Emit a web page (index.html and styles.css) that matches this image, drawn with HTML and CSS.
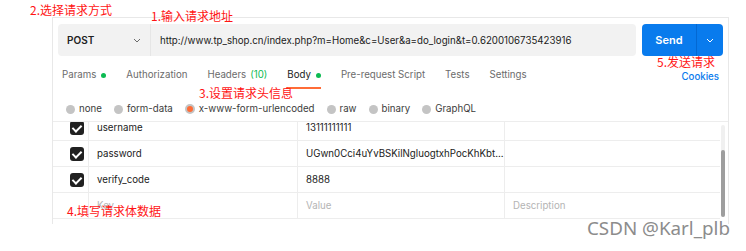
FILE: index.html
```html
<!DOCTYPE html>
<html>
	<head>
		<meta charset='utf-8'>
		<title>POST request</title>
		<link rel="stylesheet" href="styles.css">
	</head>
	<body>
		<div class='note note-method'>2.选择请求方式</div>
		<div class='note note-url'>1.输入请求地址</div>
		<div class='note note-headers'>3.设置请求头信息</div>
		<div class='note note-send'>5.发送请求</div>
		<div class='note note-body'>4.填写请求体数据</div>
		<div class='watermark'>CSDN @Karl_plb</div>
		<div class='panel'>
			<div class='request-bar'>
				<div class='address'>
					<div class='method'>
						<span>POST</span>
						<svg width='8' height='5' viewBox='0 0 8 5'><path d='M1 1l3 3 3-3' fill='none' stroke='#6b6b6b' stroke-width='1'/></svg>
					</div>
					<div class='url'>http://www.tp_shop.cn/index.php?m=Home&amp;c=User&amp;a=do_login&amp;t=0.6200106735423916</div>
				</div>
				<div class='send'>
					<span class='send-label'>Send</span>
					<span class='send-more'>
						<svg width='8' height='5' viewBox='0 0 8 5'><path d='M1 1l3 3 3-3' fill='none' stroke='#fff' stroke-width='1'/></svg>
					</span>
				</div>
			</div>
			<div class='tabs'>
				<span class='tab'>Params <i class='dot'></i></span>
				<span class='tab'>Authorization</span>
				<span class='tab'>Headers <em>(10)</em></span>
				<span class='tab active'>Body <i class='dot'></i></span>
				<span class='tab'>Pre-request Script</span>
				<span class='tab'>Tests</span>
				<span class='tab'>Settings</span>
				<span class='cookies'>Cookies</span>
			</div>
			<div class='body-types'>
				<label><i class='radio'></i>none</label>
				<label><i class='radio'></i>form-data</label>
				<label><i class='radio checked'></i>x-www-form-urlencoded</label>
				<label><i class='radio'></i>raw</label>
				<label><i class='radio'></i>binary</label>
				<label><i class='radio'></i>GraphQL</label>
			</div>
			<div class='table-wrap'>
				<div class='rows'>
					<div class='row'>
						<div class='cell check'><i class='checkbox'></i></div>
						<div class='cell'>username</div>
						<div class='cell'>13111111111</div>
						<div class='cell'></div>
					</div>
					<div class='row'>
						<div class='cell check'><i class='checkbox'></i></div>
						<div class='cell'>password</div>
						<div class='cell'>UGwn0Cci4uYvBSKilNgluogtxhPocKhKbt...</div>
						<div class='cell'></div>
					</div>
					<div class='row'>
						<div class='cell check'><i class='checkbox'></i></div>
						<div class='cell'>verify_code</div>
						<div class='cell'>8888</div>
						<div class='cell'></div>
					</div>
					<div class='row placeholder'>
						<div class='cell check'></div>
						<div class='cell'>Key</div>
						<div class='cell'>Value</div>
						<div class='cell'>Description</div>
					</div>
				</div>
				<div class='scrollbar'>
					<div class='thumb'></div>
				</div>
			</div>
		</div>
	</body>
</html>
```

FILE: styles.css
```css
:root {
	--text: rgb(33, 33, 33);
	--muted: rgb(107, 107, 107);
	--line: rgb(237, 237, 237);
	--blue: rgb(9, 123, 237);
	--orange: rgb(255, 108, 55);
	--green: rgb(12, 187, 82);
	--red: rgb(255, 20, 20);
}
html {
	background-color: #fff;
	color: var(--text);
	font-family: "Inter", "Liberation Sans", sans-serif;
	font-size: 9.7px;
}
body {
	margin: 0;
	padding: 17px 0 0 52px;
	position: relative;
	height: 234px;
	overflow: hidden;
}
.panel {
	width: 677px;
	height: 207px;
	box-sizing: border-box;
	border: 1px solid rgb(232, 232, 232);
	border-bottom: 0;
	overflow: hidden;
	display: flex;
	flex-direction: column;
}
.request-bar {
	display: flex;
	flex: none;
	padding: 6px 5px 0 5px;
	height: 32px;
}
.address {
	display: flex;
	width: 578px;
	background-color: rgb(242, 242, 242);
	border-radius: 4px;
}
.method {
	display: flex;
	align-items: center;
	justify-content: space-between;
	width: 93px;
	box-sizing: border-box;
	padding: 0 9px 0 9px;
	border-right: 1px solid rgb(230, 230, 230);
	font-weight: 600;
	font-size: 10px;
}
.url {
	display: flex;
	align-items: center;
	padding-left: 9px;
	white-space: nowrap;
}
.send {
	display: flex;
	margin-left: 6px;
	width: 81px;
	background-color: var(--blue);
	border-radius: 4px;
	color: #fff;
}
.send-label {
	display: flex;
	align-items: center;
	justify-content: center;
	width: 54px;
	font-weight: 600;
	font-size: 11px;
	border-right: 1px solid rgb(4, 104, 210);
}
.send-more {
	display: flex;
	align-items: center;
	justify-content: center;
	flex: 1;
}
.tabs {
	display: flex;
	flex: none;
	align-items: flex-end;
	padding-left: 9px;
	height: 33px;
	color: var(--muted);
}
.tab {
	display: flex;
	align-items: center;
	gap: 4px;
	padding: 12px 0 5px 0;
	margin-right: 20px;
	line-height: 14px;
	border-bottom: 2px solid transparent;
}
.tab em {
	font-style: normal;
	color: var(--green);
}
.tab.active {
	color: var(--text);
	border-bottom-color: var(--orange);
}
.dot {
	display: inline-block;
	width: 5px;
	height: 5px;
	margin-left: 1px;
	border-radius: 50%;
	background-color: var(--green);
}
.cookies {
	margin-left: auto;
	margin-right: 9px;
	padding-bottom: 7px;
	color: var(--blue);
	font-weight: 500;
}
.body-types {
	display: flex;
	flex: none;
	padding: 8px 0 0 13px;
	box-sizing: border-box;
	height: 32px;
	color: rgb(60, 60, 60);
	line-height: 14px;
}
.body-types label {
	display: flex;
	align-items: center;
	gap: 4px;
	margin-right: 12px;
}
.radio {
	display: inline-block;
	width: 9px;
	height: 9px;
	border-radius: 50%;
	background-color: rgb(196, 196, 196);
}
.radio.checked {
	width: 6px;
	height: 6px;
	border: 2px solid rgb(196, 196, 196);
	background-color: var(--orange);
}
.table-wrap {
	display: flex;
	flex: 1;
	border-top: 1px solid var(--line);
	overflow: hidden;
}
.rows {
	width: 667px;
	margin-top: -7px;
}
.row {
	display: grid;
	grid-template-columns: 35px 209px 207px 216px;
	height: 26px;
	box-sizing: border-box;
	border-bottom: 1px solid var(--line);
}
.cell {
	display: flex;
	align-items: center;
	padding-left: 8px;
	border-left: 1px solid var(--line);
	white-space: nowrap;
}
.cell.check {
	border-left: 0;
	padding-left: 17px;
}
.placeholder .cell {
	color: rgb(180, 180, 180);
}
.checkbox {
	display: inline-block;
	width: 14px;
	height: 14px;
	border-radius: 3px;
	background-color: var(--text);
	position: relative;
}
.checkbox:after {
	content: "";
	position: absolute;
	left: 4px;
	top: 2px;
	width: 4px;
	height: 7px;
	border: solid #fff;
	border-width: 0 2px 2px 0;
	transform: rotate(45deg);
}
.scrollbar {
	margin: 3px 0 0 1px;
	width: 4px;
	height: 92px;
	border-radius: 2px;
	background-color: rgb(240, 240, 240);
	display: flex;
	flex-direction: column;
	justify-content: flex-end;
}
.thumb {
	height: 67px;
	border-radius: 2px;
	background-color: rgb(158, 158, 158);
}
.note {
	position: absolute;
	color: var(--red);
	font-family: "Noto Sans CJK SC", sans-serif;
	font-size: 12px;
	line-height: 14px;
	z-index: 2;
}
.note-method { left: 30px; top: 3px; }
.note-url { left: 151px; top: 9px; }
.note-headers { left: 199px; top: 86px; }
.note-send { left: 657px; top: 55px; }
.note-body { left: 67px; top: 204px; }
.watermark {
	position: absolute;
	left: 587px;
	top: 215px;
	font-family: "Noto Sans", sans-serif;
	font-size: 18.8px;
	color: rgb(140, 140, 140);
	text-shadow: 0 0 1px #fff;
	z-index: 2;
}
```
